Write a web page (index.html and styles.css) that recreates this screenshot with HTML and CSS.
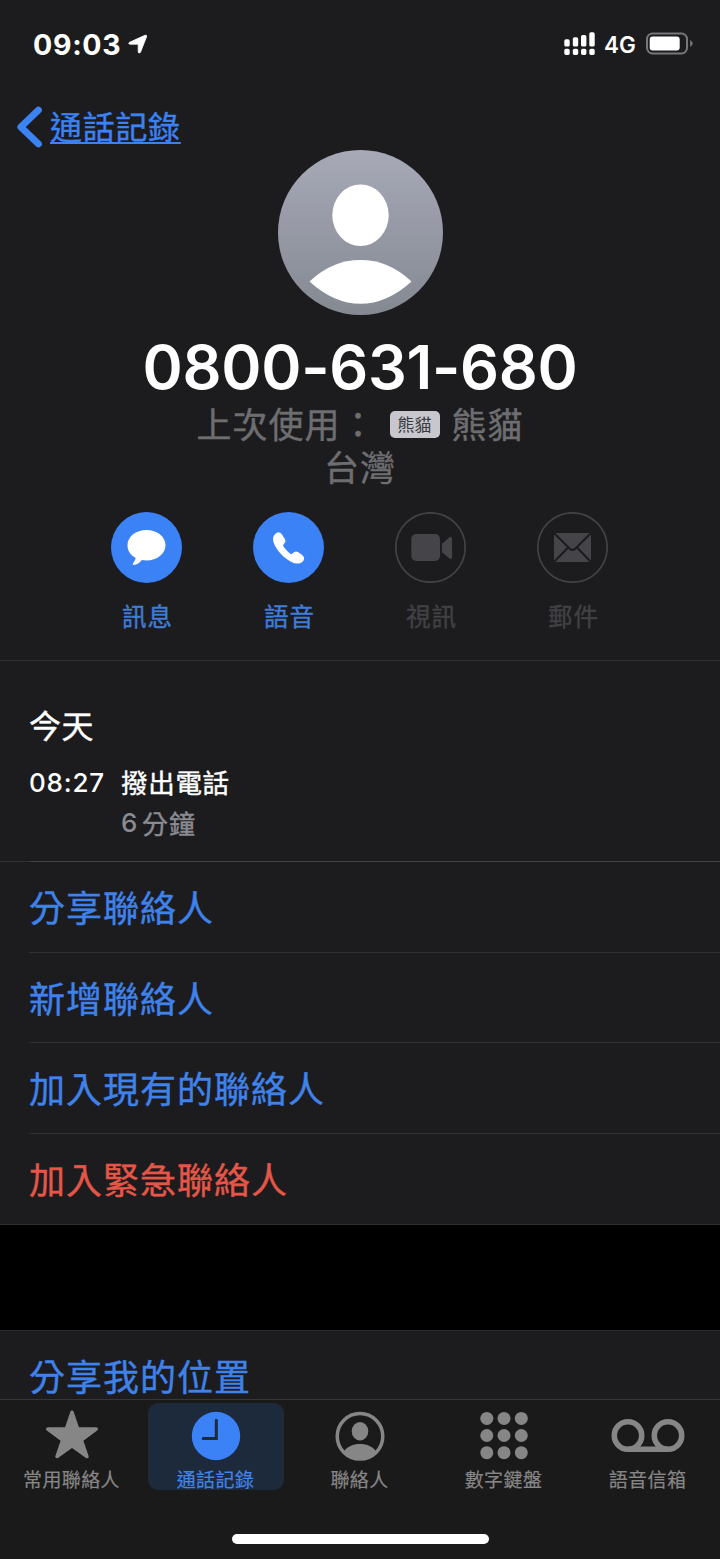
FILE: index.html
```html
<!DOCTYPE html>
<html lang="zh-Hant">
<head>
<meta charset="utf-8">
<title>通話記錄</title>
<link rel="stylesheet" href="styles.css">
</head>
<body>
<div class="phone">
  <div class="status">
    <div class="clock">09:03</div>
    <svg class="locate" width="20" height="20" viewBox="0 0 20 20"><path d="M1.500 8.300 17 1.300Q19.200.6 18.500 2.800L12.600 18Q11.900 19.300 11 19 10.200 18.700 10.200 17.800V10.200H2.200Q.9 10.200.8 9.400.7 8.700 1.500 8.300Z" fill="#fff" stroke="#fff" stroke-width=".8"/></svg>
    <svg class="signal" width="32" height="24" viewBox="0 0 32 24" fill="#fff">
      <rect x=".3" y="7.200" width="5.400" height="7.400" rx="1.700"/><rect x="8.800" y="5.200" width="5.400" height="9.400" rx="1.700"/><rect x="17" y="3" width="5.400" height="11.600" rx="1.700"/><rect x="25.300" y=".3" width="5.400" height="14.300" rx="1.700"/>
      <rect x=".3" y="16.700" width="5.400" height="6.300" rx="1.700"/><rect x="8.800" y="16.700" width="5.400" height="6.300" rx="1.700"/><rect x="17" y="16.700" width="5.400" height="6.300" rx="1.700"/><rect x="25.300" y="16.700" width="5.400" height="6.300" rx="1.700"/>
    </svg>
    <div class="network">4G</div>
    <svg class="battery" width="48" height="24" viewBox="0 0 48 24"><rect x="1" y="1.500" width="40" height="20" rx="5.500" fill="none" stroke="#77777a" stroke-width="2"/><rect x="3.700" y="4.500" width="30" height="14" rx="3" fill="#fff"/><path d="M44.200 8q5 3.500 0 7Z" fill="#77777a"/></svg>
  </div>
  <div class="nav">
    <svg width="26" height="42" viewBox="0 0 26 42"><path d="M21.500 4 3.800 21 21.500 38" fill="none" stroke="#3b82f3" stroke-width="6.800" stroke-linecap="round" stroke-linejoin="round"/></svg>
    <a class="back">通話記錄</a>
  </div>
  <section class="card">
    <svg class="avatar" width="165" height="165" viewBox="0 0 165 165">
      <defs><linearGradient id="avatar-fill" x1="0" y1="0" x2="0" y2="1"><stop offset="0" stop-color="#a7a9b7"/><stop offset="1" stop-color="#848992"/></linearGradient></defs>
      <circle cx="82.500" cy="82.500" r="82.500" fill="url(#avatar-fill)"/>
      <ellipse cx="82.500" cy="65.300" rx="28.200" ry="30.800" fill="#fff"/>
      <path d="M31.500 131.500Q54 110 82.500 110T133.500 131.500Q109 153.800 82.500 153.800T31.500 131.500Z" fill="#fff"/>
    </svg>
    <h1 class="number">0800-631-680</h1>
    <div class="line"><span>上次使用：</span><span class="sim">熊貓</span><span>熊貓</span></div>
    <div class="line">台灣</div>
    <div class="actions">
      <div class="action">
        <svg width="71" height="71" viewBox="0 0 71 71"><circle cx="35.500" cy="35.500" r="35.500" fill="#3b82f7"/><path d="M35.500 18C46 18 54.500 24.600 54.500 33.200S46 48.400 35.500 48.400Q33 48.400 30.800 48 27.600 52.400 22.600 53 21 52.800 22 51.200 24.800 48.200 24.600 45.800C19.500 43.200 16.500 38.600 16.500 33.200 16.500 24.600 25 18 35.500 18Z" fill="#fff"/></svg>
        <span class="label">訊息</span>
      </div>
      <div class="action">
        <svg width="71" height="71" viewBox="0 0 71 71"><circle cx="35.500" cy="35.500" r="35.500" fill="#3b82f7"/><path d="M21 23.500Q24 19.200 27.300 20.700C29 22 31 25.500 32.300 28Q33 29.600 31.300 31.400 29.600 32.800 30.300 34.300 33.200 38.700 37.200 41.700 38.700 42.400 40 41 42 38.800 44.200 39.700C46.500 40.800 49.500 43 51 45.200Q52 48.200 47.700 51 43.500 52.800 37.500 49.400C30 45.200 23.500 38.200 20.800 31Q19.200 26.500 21 23.500Z" fill="#fff"/></svg>
        <span class="label">語音</span>
      </div>
      <div class="action off">
        <svg width="71" height="71" viewBox="0 0 71 71"><circle cx="35.500" cy="35.500" r="34.700" fill="none" stroke="#424245" stroke-width="1.700"/><rect x="16.300" y="22" width="28.700" height="27" rx="4.800" fill="#454449"/><path d="M47 31.700 54.500 25.300Q57 24 57 26.500V45.500Q57 48 54.500 46.600L47 40.300Z" fill="#454449"/></svg>
        <span class="label">視訊</span>
      </div>
      <div class="action off">
        <svg width="71" height="71" viewBox="0 0 71 71"><circle cx="35.500" cy="35.500" r="34.700" fill="none" stroke="#424245" stroke-width="1.700"/><rect x="17" y="21" width="37" height="29" rx="2.500" fill="#454449"/><path d="M17.500 21.500 32.500 36.500Q35.500 39.500 38.500 36.500L53.500 21.500M17.500 49.500 30.500 36M53.500 49.500 40.500 36" fill="none" stroke="#1c1c1e" stroke-width="2"/></svg>
        <span class="label">郵件</span>
      </div>
    </div>
  </section>
  <section class="history">
    <h2 class="today">今天</h2>
    <div class="call"><time class="time">08:27</time><span>撥出電話</span></div>
    <div class="duration"><b class="count">6</b><span>分鐘</span></div>
  </section>
  <div class="list">
    <a class="row first">分享聯絡人</a>
    <a class="row">新增聯絡人</a>
    <a class="row">加入現有的聯絡人</a>
    <a class="row danger">加入緊急聯絡人</a>
  </div>
  <div class="gap"></div>
  <a class="location">分享我的位置</a>
  <nav class="tabs">
    <a class="tab"><svg width="76" height="60" viewBox="0 0 76 60"><path d="M38 9.200 43.700 26H62.200L47.300 37 53 53.500 38 42.800 23 53.500 28.700 37 13.800 26H32.300Z" fill="#868686" stroke="#868686" stroke-width="3.500" stroke-linejoin="round"/></svg><span class="tab-label">常用聯絡人</span></a>
    <a class="tab active"><svg width="76" height="60" viewBox="0 0 76 60"><circle cx="38" cy="33" r="24.200" fill="#3b82f7"/><path d="M38.300 17.200V35.500H25.200" fill="none" stroke="#1d2a3c" stroke-width="3" stroke-linecap="round"/></svg><span class="tab-label">通話記錄</span></a>
    <a class="tab"><svg width="76" height="60" viewBox="0 0 76 60"><circle cx="38" cy="33.300" r="22.800" fill="none" stroke="#868686" stroke-width="3.500"/><ellipse cx="38" cy="28.300" rx="8.300" ry="9.200" fill="#868686"/><path d="M22 48.500C25 43.500 31 41 38 41S51 43.500 54 48.500Q47.500 57 38 57T22 48.500Z" fill="#868686"/></svg><span class="tab-label">聯絡人</span></a>
    <a class="tab"><svg width="76" height="60" viewBox="0 0 76 60" fill="#868686"><circle cx="20.800" cy="15.400" r="6.500"/><circle cx="38" cy="15.400" r="6.500"/><circle cx="55.300" cy="15.400" r="6.500"/><circle cx="20.800" cy="32.500" r="6.500"/><circle cx="38" cy="32.500" r="6.500"/><circle cx="55.300" cy="32.500" r="6.500"/><circle cx="20.800" cy="49.700" r="6.500"/><circle cx="38" cy="49.700" r="6.500"/><circle cx="55.300" cy="49.700" r="6.500"/></svg><span class="tab-label">數字鍵盤</span></a>
    <a class="tab"><svg width="76" height="60" viewBox="0 0 76 60" fill="none" stroke="#868686" stroke-width="5.600"><circle cx="18" cy="32.500" r="13.700"/><circle cx="58" cy="32.500" r="13.700"/><path d="M18 46.200H58"/></svg><span class="tab-label">語音信箱</span></a>
  </nav>
  <div class="home"><div class="home-bar"></div></div>
</div>
</body>
</html>
```
FILE: styles.css
```css
* { box-sizing: border-box; }
body { margin: 0; background: #1c1c1e; }
svg { display: block; flex: none; }
.phone {
  width: 720px; height: 1559px; overflow: hidden;
  background: #1c1c1e; color: #fff;
  font-family: "Noto Sans CJK TC", sans-serif;
  font-weight: 400;
  -webkit-text-stroke: 0.4px currentColor;
}
.clock, .network, .number, .time, .count { font-family: Inter, sans-serif; -webkit-text-stroke: 0; }
.status { height: 88px; display: flex; align-items: center; padding-left: 33px; }
.clock { width: 95px; font-size: 28.500px; font-weight: 700; letter-spacing: 0.700px; }
.locate { margin-top: -1px; }
.signal { margin-left: 416px; margin-top: -1px; }
.network { margin-left: 8px; width: 42px; font-size: 22.500px; font-weight: 600; padding-top: 1px; }
.nav { height: 62px; display: flex; align-items: center; padding: 16px 0 0 17px; gap: 7px; color: #3b82f3; }
.back {
  margin-top: -5px;
  font-size: 32px; letter-spacing: 0.700px; line-height: 42px;
  text-decoration: underline; text-decoration-thickness: 2px;
  text-underline-offset: 3px; text-decoration-skip-ink: none;
}
.card { height: 511px; border-bottom: 1px solid #303032; display: flex; flex-direction: column; align-items: center; }
.number { margin: 19px 0 0; height: 67px; line-height: 67px; font-size: 61px; font-weight: 600; letter-spacing: -0.300px; white-space: nowrap; }
.line { height: 43px; line-height: 43px; font-size: 35px; letter-spacing: 1px; color: #6e6e71; display: flex; align-items: center; white-space: nowrap; }
.sim {
  width: 50px; height: 27px; line-height: 26px; border-radius: 5px; margin: 4px 12px 0 13px;
  background: #c8c7cd; color: #3a3a3d; font-size: 17px; letter-spacing: 0; text-align: center;
  -webkit-text-stroke: 0;
}
.actions { display: flex; gap: 71px; margin-top: 25px; padding-right: 2px; }
.action { width: 71px; display: flex; flex-direction: column; align-items: center; gap: 15px; color: #3f7dd9; font-size: 24.500px; line-height: 36px; letter-spacing: 1px; white-space: nowrap; }
.label { padding-left: 3px; }
.off { color: #414144; }
.history { height: 200px; padding: 41px 0 0 29px; }
.today { margin: 0; font-size: 32px; line-height: 44px; font-weight: 400; letter-spacing: 0.600px; }
.call { display: flex; align-items: center; height: 40px; margin-top: 16px; font-size: 26.500px; letter-spacing: 0.700px; line-height: 38px; }
.time { width: 92px; padding-top: 1px; font-size: 26px; font-weight: 500; letter-spacing: 0.800px; }
.duration { display: flex; align-items: center; height: 40px; padding-left: 92px; font-size: 26px; letter-spacing: 1px; color: #8b8b92; }
.count { width: 21px; font-size: 26px; font-weight: 500; }
.list { border-top: 1px solid #303032; }
.row { display: block; height: 90.700px; margin-left: 29px; border-top: 1px solid #303032; color: #3f82ea; font-size: 36px; letter-spacing: 1px; line-height: 88px; }
.first { margin-top: -1px; border-color: #414143; }
.danger { color: #e45648; }
.gap { height: 106px; background: #000; border-top: 1px solid #303032; }
.location { display: block; height: 69px; padding-left: 29px; border-top: 1px solid #29292b; color: #3f82ea; font-size: 36px; letter-spacing: 1px; line-height: 88px; overflow: hidden; }
.tabs { height: 92px; padding: 3px 0 0; background: #1a1a1a; border-top: 1px solid #37373a; display: flex; -webkit-text-stroke: 0.200px currentColor; }
.tab { width: 136px; height: 87px; margin: 0 4px; border-radius: 10px; display: flex; flex-direction: column; align-items: center; color: #868686; font-size: 19px; letter-spacing: 0.400px; line-height: 32px; white-space: nowrap; }
.tab-label { margin-left: -1px; }
.active { background: #1d2a3c; color: #4284e8; }
.home { height: 68px; padding-top: 43px; background: #1a1a1a; }
.home-bar { width: 257px; height: 10px; margin-left: 232px; border-radius: 5px; background: #fff; }
```
